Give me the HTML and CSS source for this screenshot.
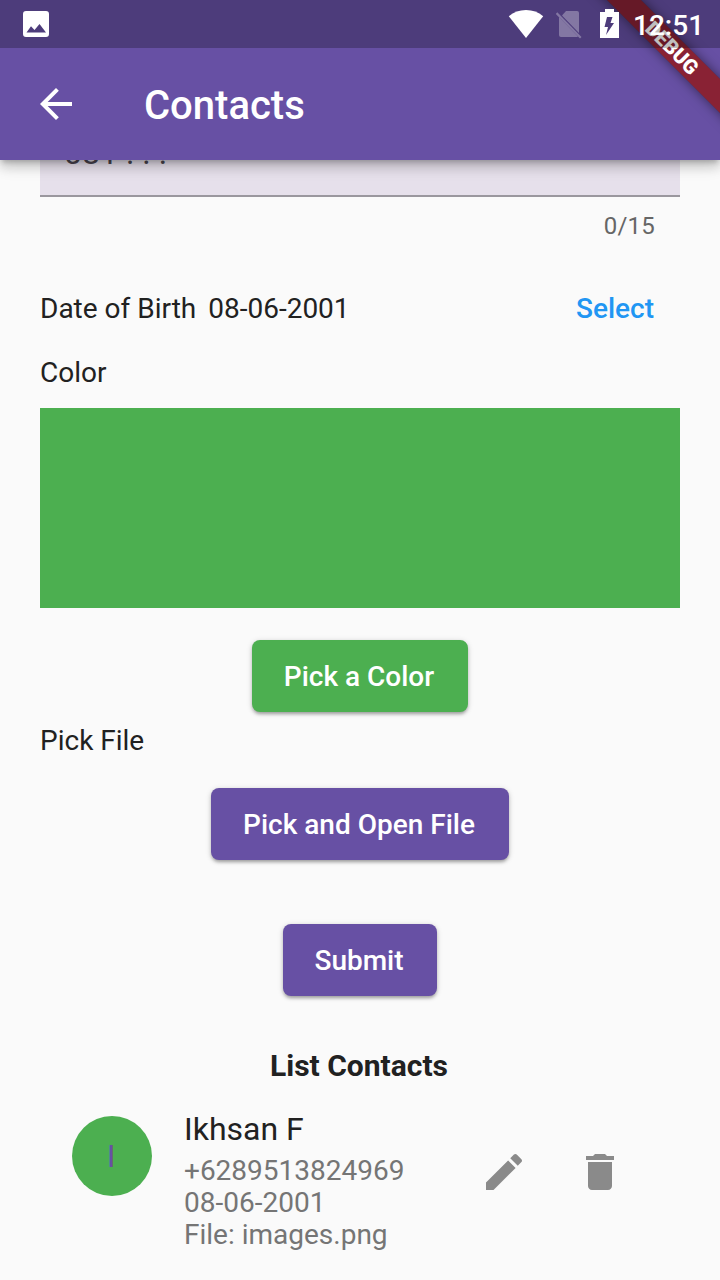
FILE: index.html
```html
<!DOCTYPE html>
<html lang="en">
<head>
<meta charset="utf-8">
<title>Contacts</title>
<link rel="stylesheet" href="styles.css">
</head>
<body>
<div class="screen">
  <header class="header">
    <div class="status">
      <svg class="status-image" width="26" height="26" viewBox="0 0 26 26"><path fill="#fff" fill-rule="evenodd" d="M3 0H23Q26 0 26 3V23Q26 26 23 26H3Q0 26 0 23V3Q0 0 3 0ZM3.500 21.500H23L16.500 13L11.500 19L8 15.200Z"/></svg>
      <svg class="status-wifi" width="36" height="30" viewBox="0 0 36 30"><path fill="#fff" d="M.8 6.200Q8 0 18 0T35.200 6.200L18 28Z"/></svg>
      <svg class="status-sim" width="28" height="30" viewBox="0 0 28 30"><g fill="#fff" opacity=".3"><path d="M11 1H22Q24 1 24 3V23L7 5.500Z"/><path d="M4 7L23 26.500L22 27H6Q4 27 4 25Z"/><path d="M2.300 2.300L26.500 27L25 28.500L.8 4Z"/></g></svg>
      <svg class="status-battery" width="20" height="30" viewBox="0 0 20 30"><path fill="#fff" fill-rule="evenodd" d="M5 0H14V3H19V29H0V3H5ZM7 8L4.500 18H8L6 26L14 14H10.500L12.500 8Z"/></svg>
      <span class="clock">12:51</span>
    </div>
    <div class="appbar">
      <svg class="back" width="48" height="48" viewBox="0 0 24 24"><path fill="#fff" d="M20 11H7.830l5.590-5.590L12 4l-8 8 8 8 1.410-1.410L7.830 13H20v-2z"/></svg>
      <h1 class="title">Contacts</h1>
    </div>
    <div class="ribbon-area"><div class="ribbon">DEBUG</div></div>
  </header>
  <main class="content">
    <div class="field"><span class="hint">081 . . .</span></div>
    <div class="counter">0/15</div>
    <div class="date-row"><span>Date of Birth</span><span class="date">08-06-2001</span><span class="select">Select</span></div>
    <div class="label">Color</div>
    <div class="swatch"></div>
    <button class="button button-color">Pick a Color</button>
    <div class="label label-file">Pick File</div>
    <button class="button button-file">Pick and Open File</button>
    <button class="button button-submit">Submit</button>
    <h2 class="list-title">List Contacts</h2>
    <div class="contact">
      <div class="avatar">I</div>
      <div class="info">
        <div class="name">Ikhsan F</div>
        <div class="detail">+6289513824969</div>
        <div class="detail">08-06-2001</div>
        <div class="detail">File: images.png</div>
      </div>
      <svg class="action" width="48" height="48" viewBox="0 0 24 24"><path d="M3 17.250V21h3.750L17.810 9.940l-3.750-3.750L3 17.250zM20.710 7.040c.39-.39.39-1.020 0-1.410l-2.340-2.340c-.39-.39-1.020-.39-1.410 0l-1.830 1.830 3.750 3.750 1.830-1.830z"/></svg>
      <svg class="action" width="48" height="48" viewBox="0 0 24 24"><path d="M6 19c0 1.100.9 2 2 2h8c1.100 0 2-.9 2-2V7H6v12zM19 4h-3.500l-1-1h-5l-1 1H5v2h14V4z"/></svg>
    </div>
  </main>
</div>
</body>
</html>
```
FILE: styles.css
```css
* { box-sizing: border-box; }
body { margin: 0; font-family: Roboto, "Liberation Sans", sans-serif; background: #fafafa; }
.screen { width: 720px; height: 1280px; overflow: hidden; background: #fafafa; color: #212121; }
.header { position: relative; z-index: 1; height: 160px; background: #6750a4; box-shadow: 0 4px 5px -2px rgba(0,0,0,.2), 0 8px 10px rgba(0,0,0,.14), 0 2px 20px rgba(0,0,0,.12); }
.status { position: relative; z-index: 2; height: 48px; padding-left: 23px; display: flex; align-items: flex-start; background: rgba(0,0,0,.25); }
.status-image { margin-top: 11px; }
.status-wifi { margin: 10px 0 0 459px; }
.status-sim { margin: 10px 0 0 11px; }
.status-battery { margin: 9px 0 0 17px; }
.clock { margin-left: 13px; line-height: 52px; font-size: 28px; font-weight: 500; color: #fff; }
.appbar { height: 112px; padding-left: 32px; display: flex; align-items: center; }
.title { margin: 4px 0 0 64px; font-size: 40px; line-height: 48px; font-weight: 500; color: #fff; }
.ribbon-area { position: absolute; z-index: 1; top: 0; right: 0; width: 160px; height: 160px; overflow: hidden; }
.ribbon { position: absolute; left: 12px; top: 36px; width: 200px; height: 24px; transform: rotate(45deg); background: rgba(146,22,22,.784); box-shadow: 0 0 12px rgba(0,0,0,.5); color: #fff; font-size: 20.4px; line-height: 24px; font-weight: 900; text-align: center; }
.content { display: flex; flex-direction: column; padding: 0 40px; font-size: 28px; }
.field { height: 37px; border-bottom: 2px solid #9a979e; background: #e6e0eb; overflow: hidden; display: flex; align-items: flex-end; padding-left: 24px; }
.hint { font-size: 32px; line-height: 38px; color: #49454f; margin-bottom: 23px; white-space: nowrap; }
.counter { margin-top: 14px; padding-right: 25px; height: 30px; line-height: 30px; text-align: right; font-size: 24px; letter-spacing: .2px; color: #666; }
.date-row { margin-top: 50px; height: 36px; line-height: 36px; display: flex; }
.date { margin-left: 12px; }
.select { margin-left: auto; padding-right: 26px; color: #2196f3; font-weight: 500; }
.label { margin-top: 28px; height: 36px; line-height: 36px; }
.swatch { margin-top: 17px; height: 200px; background: #4caf50; }
.button { align-self: center; height: 72px; padding: 0 2px 0 0; border: 0; border-radius: 8px; background: #6750a4; color: #fff; font-family: inherit; font-size: 28px; font-weight: 500; box-shadow: 0 3px 3px -1px rgba(0,0,0,.2), 0 2px 4px rgba(0,0,0,.14), 0 1px 6px rgba(0,0,0,.12); }
.button-color { margin-top: 32px; width: 216px; background: #4caf50; }
.label-file { margin-top: 11px; }
.button-file { margin-top: 29px; width: 298px; }
.button-submit { margin-top: 64px; width: 154px; }
.list-title { margin: 50px 2px 0 0; text-align: center; font-size: 30px; line-height: 40px; font-weight: 700; }
.contact { padding-left: 32px; margin-top: 25px; display: flex; align-items: flex-start; }
.avatar { width: 80px; height: 80px; margin-top: 5px; padding-right: 2px; border-radius: 50%; background: #4caf50; color: #6750a4; text-align: center; font-size: 32px; line-height: 80px; }
.info { margin-left: 32px; width: 288px; }
.name { font-size: 32px; line-height: 36px; margin-bottom: 8px; }
.detail { line-height: 32px; color: #757575; }
.action { margin: 37px 48px 0 8px; fill: #8a8a8a; flex: none; }
.action + .action { margin-left: 0; }
```
